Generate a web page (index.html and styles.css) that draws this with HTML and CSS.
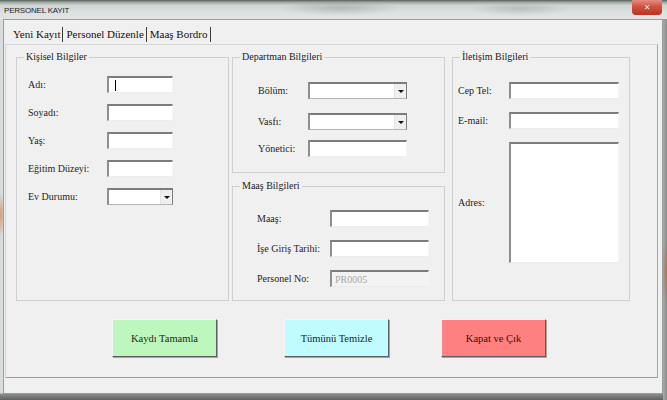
FILE: index.html
```html
<!DOCTYPE html>
<html lang="tr">
<head>
<meta charset="utf-8">
<title>PERSONEL KAYIT</title>
<link rel="stylesheet" href="styles.css">
</head>
<body>
<div class="window">
  <header class="titlebar">
    <span class="title">PERSONEL KAYIT</span>
    <span class="close">✕</span>
  </header>
  <div class="frame">
    <nav class="tabs">
      <span class="tab tab-first">Yeni Kayıt</span>
      <span class="tab">Personel Düzenle</span>
      <span class="tab">Maaş Bordro</span>
    </nav>
    <section class="page">
      <div class="groups">
        <fieldset class="box box-personal">
          <legend>Kişisel Bilgiler</legend>
          <div class="box-body">
            <div class="row"><label>Adı:</label><span class="field"><span class="caret"></span></span></div>
            <div class="row"><label>Soyadı:</label><span class="field"></span></div>
            <div class="row"><label>Yaş:</label><span class="field"></span></div>
            <div class="row"><label>Eğitim Düzeyi:</label><span class="field"></span></div>
            <div class="row"><label>Ev Durumu:</label><span class="field combo"><span class="drop"></span></span></div>
          </div>
        </fieldset>

        <div class="middle">
          <fieldset class="box box-dept">
            <legend>Departman Bilgileri</legend>
            <div class="box-body">
              <div class="row"><label>Bölüm:</label><span class="field combo"><span class="drop"></span></span></div>
              <div class="row row-vasfi"><label>Vasfı:</label><span class="field combo"><span class="drop"></span></span></div>
              <div class="row row-mgr"><label>Yönetici:</label><span class="field"></span></div>
            </div>
          </fieldset>
          <fieldset class="box box-salary">
            <legend>Maaş Bilgileri</legend>
            <div class="box-body">
              <div class="row"><label>Maaş:</label><span class="field"></span></div>
              <div class="row"><label>İşe Giriş Tarihi:</label><span class="field"></span></div>
              <div class="row"><label>Personel No:</label><span class="field disabled">PR0005</span></div>
            </div>
          </fieldset>
        </div>

        <fieldset class="box box-contact">
          <legend>İletişim Bilgileri</legend>
          <div class="box-body">
            <div class="row"><label>Cep Tel:</label><span class="field"></span></div>
            <div class="row"><label>E-mail:</label><span class="field"></span></div>
            <div class="row row-address"><label>Adres:</label><span class="field memo"></span></div>
          </div>
        </fieldset>
      </div>

      <div class="actions">
        <span class="btn btn-save">Kaydı Tamamla</span>
        <span class="btn btn-clear">Tümünü Temizle</span>
        <span class="btn btn-close">Kapat ve Çık</span>
      </div>
    </section>
  </div>
</div>
</body>
</html>
```

FILE: styles.css
```css
* { box-sizing: border-box; }

html, body { margin: 0; padding: 0; }

body {
  width: 667px;
  height: 400px;
  overflow: hidden;
  background: #6c706e;
  color: #1c1c1c;
}

/* form text uses a Times-metric serif */
.tab, .box, .box legend, .row label, .field, .btn {
  font-family: "Liberation Serif", "DejaVu Serif", serif;
}

/* outer window chrome, with the desktop showing softly through the edges */
.window {
  height: 400px;
  display: flex;
  flex-direction: column;
  background:
    radial-gradient(4px 22px at 1px 215px, rgba(196, 110, 50, 0.55), rgba(196, 110, 50, 0) 100%),
    radial-gradient(4px 30px at 666px 272px, rgba(190, 105, 45, 0.6), rgba(190, 105, 45, 0) 100%),
    linear-gradient(to right, rgba(0, 0, 0, 0) 663px, #a7aaa9 663px, #8a8d8c 667px),
    linear-gradient(to bottom, #d9dcdc 0, #d9dcdc 393px, #8a8d8c 394px, #5f6261 400px);
}

/* ---- title bar ---- */
.titlebar {
  flex: none;
  height: 19px;
  display: flex;
  justify-content: space-between;
  align-items: flex-start;
  padding-left: 4px;
  background:
    radial-gradient(60px 8px at 340px 8px, rgba(120, 128, 124, 0.35), rgba(120, 128, 124, 0)),
    radial-gradient(50px 7px at 520px 9px, rgba(120, 128, 124, 0.3), rgba(120, 128, 124, 0)),
    linear-gradient(to bottom, #4f5e55 0, #98a29d 2px, #cfd4d2 5px, #dde0e0 12px, #e2e4e4 19px);
}

.title {
  margin-top: 6px;
  font-family: "Liberation Sans", Arial, sans-serif;
  font-size: 8px;
  line-height: 9px;
  letter-spacing: -0.2px;
  color: #1e1e1e;
}

.close {
  width: 30px;
  height: 15px;
  margin-right: 5px;
  border-radius: 0 0 4px 4px;
  background: linear-gradient(to bottom, #e58d7f 0, #d0513f 45%, #bb3220 100%);
  color: #fff;
  font-family: "DejaVu Sans", sans-serif;
  font-size: 8px;
  font-weight: bold;
  text-shadow: 0 0 1px #6a1a10;
  display: flex;
  align-items: center;
  justify-content: center;
}

/* ---- window client frame ---- */
.frame {
  flex: none;
  height: 375px;
  margin: 0 4px 0 3px;
  border: 1px solid #9a9d9d;
  background: #f0f0f0;
  display: flex;
  flex-direction: column;
  padding: 7px 4px 0 1px;
}

/* ---- tab strip ---- */
.tabs {
  flex: none;
  height: 17px;
  display: flex;
  align-items: flex-start;
}

.tab {
  height: 15px;
  line-height: 15px;
  font-size: 11px;
  padding: 0 2px 0 3px;
  border-right: 1px solid #3c3c3c;
  color: #111;
  white-space: nowrap;
}

.tab-first { padding-left: 8px; }

/* ---- tab page ---- */
.page {
  flex: none;
  height: 334px;
  border: 1px solid #d6d6d6;
  border-right-color: #a6a6a6;
  border-bottom-color: #9c9c9c;
  padding: 6px 0 0 10px;
}

.groups {
  display: flex;
  align-items: flex-start;
  gap: 3px;
}

.middle {
  display: flex;
  flex-direction: column;
  gap: 7px;
}

/* group boxes */
.box {
  margin: 0;
  padding: 0;
  min-width: 0;
  border: 1px solid #cdd0d2;
  font-size: 10px;
}

.box legend {
  margin-left: 7px;
  padding: 0 2px;
  font-size: 10px;
  line-height: 12px;
  color: #1a1a1a;
}

.row {
  display: flex;
  align-items: center;
  height: 17px;
}

.row label {
  flex: none;
  font-size: 10px;
  color: #1e1e1e;
}

.box-personal { width: 213px; height: 250px; }
.box-personal .box-body { padding: 13px 0 0 11px; }
.box-personal .row + .row { margin-top: 11px; }
.box-personal label { width: 79px; }
.box-personal .field { width: 66px; }

.box-dept { width: 213px; height: 122px; }
.box-dept .box-body { padding: 19px 0 0 25px; }
.box-dept label { width: 50px; }
.box-dept .field { width: 99px; }
.box-dept .row-vasfi { margin-top: 14px; }
.box-dept .row-mgr { margin-top: 10px; }

.box-salary { width: 213px; height: 121px; }
.box-salary .box-body { padding: 18px 0 0 24px; }
.box-salary .row + .row { margin-top: 13px; }
.box-salary label { width: 73px; }
.box-salary .field { width: 99px; }

.box-contact { width: 178px; height: 250px; margin-left: 4px; }
.box-contact .box-body { padding: 19px 0 0 5px; }
.box-contact .row + .row { margin-top: 13px; }
.box-contact .row-address { height: 121px; margin-top: 14px; }
.box-contact label { width: 51px; }
.box-contact .field { width: 110px; }
.box-contact .memo { height: 121px; }

/* sunken text fields */
.field {
  flex: none;
  position: relative;
  height: 17px;
  background: #fff;
  border-top: 2px solid #7c7c7c;
  border-left: 2px solid #8e8e8e;
  border-right: 1px solid #f6f6f6;
  border-bottom: 1px solid #ececec;
  display: flex;
  align-items: center;
}

.caret {
  position: absolute;
  left: 6px;
  top: 2px;
  width: 1px;
  height: 11px;
  background: #000;
}

.combo {
  justify-content: flex-end;
  border-right-color: #7e7e7e;
  border-bottom-color: #b4b4b4;
}

.drop {
  width: 12px;
  height: 100%;
  background: #efefef;
  border-left: 1px solid #e2e2e2;
  display: flex;
  align-items: center;
  justify-content: center;
}

.drop::after {
  content: "";
  border-left: 3px solid transparent;
  border-right: 3px solid transparent;
  border-top: 3px solid #111;
}

.disabled {
  background: #f3f3f3;
  color: #a8a8a8;
  font-size: 10px;
  padding-left: 3px;
}

/* ---- command buttons ---- */
.actions {
  display: flex;
  margin-top: 18px;
  padding-left: 96px;
}

.btn {
  width: 105px;
  height: 38px;
  display: flex;
  align-items: center;
  justify-content: center;
  font-size: 10.5px;
  border: 1px solid;
  border-color: #f6f6f6 #5e5e5e #5e5e5e #f6f6f6;
  box-shadow: 1px 1px 0 #a4a4a4;
}

.btn-save { background: #bdf7bd; color: #1b2a1b; }
.btn-clear { background: #c0fbff; color: #1a2430; margin-left: 67px; }
.btn-close { background: #ff8080; color: #3a1010; margin-left: 52px; }
```
